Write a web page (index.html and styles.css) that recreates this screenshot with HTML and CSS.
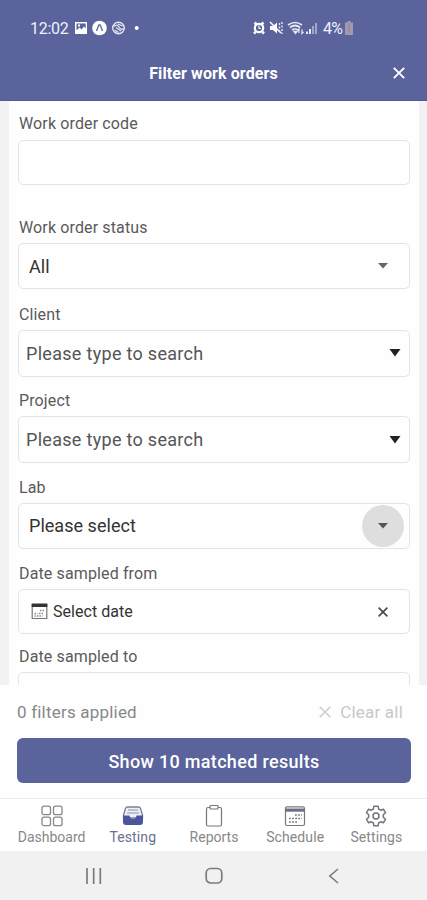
FILE: index.html
```html
<!DOCTYPE html>
<html lang="en">
<head>
<meta charset="utf-8">
<title>Filter work orders</title>
<link rel="stylesheet" href="styles.css">
</head>
<body>
<div class="screen">
  <header class="header">
    <div class="status">
      <span class="time">12:02</span>
      <svg class="status-left" width="66" height="16" viewBox="0 0 66 16">
        <path fill="#fff" fill-rule="evenodd" d="M1 2h12v12H1zM2.500 3.500v7l3-3 2 2 2.500-3 1.700 2V3.500z"/>
        <path fill="#fff" d="M4 4.500h2v2H4z"/>
        <circle cx="25.500" cy="8" r="7.300" fill="#fff"/>
        <path d="M22.500 11l2.300-6h1.400l2.300 6" fill="none" stroke="#6c72a5" stroke-width="1.500"/>
        <circle cx="44.500" cy="8" r="5.800" fill="none" stroke="#e5e7f3" stroke-width="1.400"/>
        <path d="M40 6.500q3-3 5 .5t4.500 1.500M40.500 10l4 2.500M42 7.500l5 3.500M44 4l4.500 2" fill="none" stroke="#e5e7f3" stroke-width="1.300"/>
        <circle cx="62.700" cy="8" r="2" fill="#fff"/>
      </svg>
      <svg class="status-right" width="66" height="16" viewBox="0 0 66 16">
        <path d="M2.500 4.500l2-2M11.500 4.500l-2-2M3.500 12l-1.500 1.500M10.500 12l1.500 1.500" stroke="#fff" stroke-width="2.500"/>
        <circle cx="7" cy="8" r="4.200" fill="none" stroke="#fff" stroke-width="2.200"/>
        <path d="M7 5.500V8.500h2" fill="none" stroke="#fff" stroke-width="1.200"/>
        <path d="M18 6h3l4-3.500v11L21 10h-3z" fill="#fff"/>
        <path d="M18 2l11 11" stroke="#fff" stroke-width="1.500"/>
        <path d="M27.500 3v10M30 2v12" stroke="#e5e7f3" stroke-width="1.400" stroke-dasharray="2 1.500"/>
        <path d="M36 5q7-5 14 0M38 7.500q5-4 10 0M40 10q3-2 6 0" fill="none" stroke="#e5e7f3" stroke-width="1.700"/>
        <path d="M42 11.500l1.500 2 1.500-2zM47 13V9l-1.500 1.500M50 9.500v4l1.500-1.500" fill="none" stroke="#e5e7f3" stroke-width="1.300"/>
        <path d="M55 14v-2.500M58 14v-5" stroke="#fff" stroke-width="1.700"/>
        <path d="M61 14V6M64 14V3" stroke="#a5a9cd" stroke-width="1.900"/>
      </svg>
      <span class="charge">4%</span>
      <svg class="battery" width="8" height="14" viewBox="0 0 8 14"><path d="M2.500 0h3v1.500H8V14H0V1.500h2.500z" fill="#999bb8"/><path d="M3 3h2v9H3z" fill="#b28391"/></svg>
    </div>
    <div class="titlebar">
      <h1>Filter work orders</h1>
      <svg class="close" width="12" height="12" viewBox="0 0 12 12"><path d="M.8 .8l10.400 10.400M11.200 .8L.8 11.200" stroke="#fff" stroke-width="1.900"/></svg>
    </div>
  </header>

  <main class="body">
    <form class="form">
      <div class="field code"><label>Work order code</label><div class="box"></div></div>
      <div class="field"><label>Work order status</label><div class="box picker"><span class="value all">All</span><svg class="caret" width="10" height="6" viewBox="0 0 10 6"><path d="M0 0h10L5 5.500z" fill="#666"/></svg></div></div>
      <div class="field"><label>Client</label><div class="box search"><span class="value hint">Please type to search</span><svg class="caret" width="12" height="8" viewBox="0 0 12 8"><path d="M.5 0h11L6 7.500z" fill="#222"/></svg></div></div>
      <div class="field"><label>Project</label><div class="box search"><span class="value hint">Please type to search</span><svg class="caret" width="12" height="8" viewBox="0 0 12 8"><path d="M.5 0h11L6 7.500z" fill="#222"/></svg></div></div>
      <div class="field lab"><label>Lab</label><div class="box picker"><span class="value">Please select</span><span class="ripple"><svg width="10" height="6" viewBox="0 0 10 6"><path d="M0 0h10L5 5.500z" fill="#555"/></svg></span></div></div>
      <div class="field date"><label>Date sampled from</label><div class="box dated">
        <svg width="17" height="17" viewBox="0 0 17 17"><path d="M1.200 1.500h14.600v14H1.200z" fill="none" stroke="#777" stroke-width="1.200"/><path d="M.7 .5h15.600v3.500H.7z" fill="#333"/><path d="M9 7.500h5M3.500 10.500h3M8 10.500h5M3.500 13h8" stroke="#888" stroke-width="1.500" stroke-dasharray="1.400 1.100"/></svg>
        <span class="select-date">Select date</span>
        <svg class="clear-date" width="10" height="10" viewBox="0 0 10 10"><path d="M.6 .6l8.800 8.800M9.400 .6L.6 9.400" stroke="#444" stroke-width="1.500"/></svg>
      </div></div>
      <div class="field last"><label>Date sampled to</label><div class="box"></div></div>
    </form>
  </main>

  <section class="actions">
    <div class="summary">
      <span class="applied">0 filters applied</span>
      <span class="clear"><svg width="12" height="12" viewBox="0 0 12 12"><path d="M.7 .7l10.600 10.600M11.300 .7L.7 11.300" stroke="#c8c8c8" stroke-width="1.300"/></svg><span>Clear all</span></span>
    </div>
    <button class="show" type="button">Show 10 matched results</button>
  </section>

  <nav class="tabs">
    <a class="tab"><svg width="22" height="22" viewBox="0 0 22 22" fill="none" stroke="#888" stroke-width="1.300"><rect x="1" y="1.200" width="8.500" height="8.500" rx="2"/><rect x="12.500" y="1.200" width="8.500" height="8.500" rx="2"/><rect x="1" y="12.200" width="8.500" height="8.500" rx="2"/><rect x="12.500" y="12.200" width="8.500" height="8.500" rx="2"/></svg><span>Dashboard</span></a>
    <a class="tab active"><svg width="22" height="22" viewBox="0 0 22 22"><path d="M1.500 10L3.500 3.500Q4 2 5.500 2h11Q18 2 18.500 3.500l2 6.500v3h-19z" fill="#eef0f5" stroke="#758096" stroke-width="1.300"/><path d="M6 5h10M5 8h12" stroke="#8992a4" stroke-width="1.200"/><path d="M1 10.500h6.500q.5 3.500 3.500 3.500t3.500-3.500H21V17q0 3-3 3H4q-3 0-3-3z" fill="#4b549c"/></svg><span>Testing</span></a>
    <a class="tab"><svg width="22" height="22" viewBox="0 0 22 22" fill="none" stroke="#777" stroke-width="1.200"><path d="M7 2.500H5Q3.500 2.500 3.500 4v15.500Q3.500 21 5 21h12q1.500 0 1.500-1.500V4q0-1.500-1.500-1.500h-2"/><path d="M7 1.500q0-1 1-1h6q1 0 1 1V3q0 1-1 1H8Q7 4 7 3z"/></svg><span>Reports</span></a>
    <a class="tab"><svg width="22" height="22" viewBox="0 0 22 22"><rect x="1.500" y="1.800" width="19" height="18.700" rx="1.500" fill="none" stroke="#777" stroke-width="1.200"/><path d="M1.500 3.500h19v3.200h-19z" fill="#697083"/><path d="M11 10h7M5 13.500h13M5 17h9" stroke="#777" stroke-width="1.600" stroke-dasharray="1.800 1.300"/></svg><span>Schedule</span></a>
    <a class="tab"><svg width="22" height="22" viewBox="0 0 22 22" fill="none" stroke="#70757d" stroke-width="1.500" stroke-linejoin="round"><path d="M8.900 1.200h4.200l.5 2.800 2.100 1.200 2.700-1 2.100 3.600-2.200 1.900v2.600l2.200 1.900-2.100 3.600-2.700-1-2.100 1.200-.5 2.800H8.900L8.400 18l-2.100-1.200-2.700 1-2.100-3.600 2.200-1.900V9.700L1.500 7.800l2.100-3.600 2.700 1L8.400 4z"/><circle cx="11" cy="11" r="3"/></svg><span>Settings</span></a>
  </nav>

  <footer class="system">
    <svg width="18" height="16" viewBox="0 0 18 16"><path d="M2 0v16M8.700 0v16M15.300 0v16" stroke="#7b7b7b" stroke-width="1.700"/></svg>
    <svg width="18" height="18" viewBox="0 0 18 18"><rect x="1.200" y="1.500" width="15.600" height="14.500" rx="4.500" fill="none" stroke="#7b7b7b" stroke-width="1.700"/></svg>
    <svg width="18" height="16" viewBox="0 0 18 16"><path d="M13 1L4.800 8l8.200 7" fill="none" stroke="#7b7b7b" stroke-width="1.600"/></svg>
  </footer>
</div>
</body>
</html>
```
FILE: styles.css
```css
* { box-sizing: border-box; }
body { margin: 0; font-family: Roboto, sans-serif; color: #333; }
svg { display: block; flex: none; }
.screen { width: 427px; height: 900px; display: flex; flex-direction: column; overflow: hidden; background: #fff; }

.header { flex: none; height: 101px; background: #5a639b; color: #fff; border-bottom: 1px solid #535b94; }
.status { height: 46px; padding: 10px 74px 0 30px; display: flex; align-items: center; }
.time { font-size: 16px; letter-spacing: -.3px; width: 44px; white-space: nowrap; color: #eef0fb; }
.status-right { margin-left: auto; }
.charge { font-size: 16px; width: 22px; margin-left: 5px; letter-spacing: -.7px; color: #eef0fb; }
.titlebar { height: 54px; display: grid; grid-template-columns: 1fr auto 1fr; align-items: center; }
h1 { grid-column: 2; margin: 0; padding-top: 2px; font-size: 16px; line-height: 20px; font-weight: 700; letter-spacing: .1px; }
.close { justify-self: end; margin-right: 22px; }

.body { flex: none; height: 584px; overflow: hidden; background: #f2f2f2; padding: 0 8px 0 9px; }
.form { height: 640px; background: #fefefe; padding: 13px 9px 0; }
.field { height: 86.500px; }
.field.code { height: 104px; }
.field.date { height: 83px; }
label { display: block; font-size: 16px; line-height: 20px; margin: 0 0 5px 1px; color: #5a5a5a; letter-spacing: .13px; white-space: nowrap; }
.code label { margin-bottom: 6px; }
.box { height: 46px; border: 1px solid #e4e4e4; border-radius: 5px; display: flex; align-items: center; justify-content: space-between; }
.code .box, .date .box { height: 45px; }
.picker { padding: 0 21px 0 10px; }
.search { height: 47px; padding: 0 8px 0 7px; }
.value { font-size: 18px; line-height: 22px; letter-spacing: .03px; padding-top: 1px; }
.hint { color: #555; letter-spacing: .3px; }
.lab .box { padding-right: 5px; }
.ripple { width: 42px; height: 42px; border-radius: 50%; background: #dedede; display: flex; align-items: center; justify-content: center; }
.dated { padding: 0 21px 0 12px; }
.select-date { margin: 0 auto 0 5px; font-size: 16px; letter-spacing: .04px; }

.actions { flex: none; height: 114px; background: #fefefe; padding: 15px 16px 0 17px; border-bottom: 1px solid #ececec; }
.summary { height: 24px; display: flex; align-items: center; justify-content: space-between; padding-right: 8px; font-size: 17px; letter-spacing: .2px; color: #888; }
.clear { display: flex; align-items: center; gap: 9px; color: #c8c8c8; }
.show { display: block; margin-top: 14px; width: 100%; height: 45px; border: 0; border-radius: 6px; background: #5a639b; color: #fff; font: 500 18px/47px Roboto, sans-serif; letter-spacing: .32px; padding: 0; }

.tabs { flex: none; height: 52px; padding: 0 10px 0 11px; display: grid; grid-template-columns: repeat(5, 1fr); background: #fff; }
.tab { display: flex; flex-direction: column; align-items: center; padding-top: 6px; font-size: 14px; line-height: 21px; color: #888; }
.active { color: #6b7092; }
.tab:nth-child(2), .tab:nth-child(n+4) { letter-spacing: .1px; }
.system { flex: 1; background: #f1f1f1; padding: 0 33px 0 34px; display: grid; grid-template-columns: repeat(3, 1fr); justify-items: center; align-items: center; }
```
